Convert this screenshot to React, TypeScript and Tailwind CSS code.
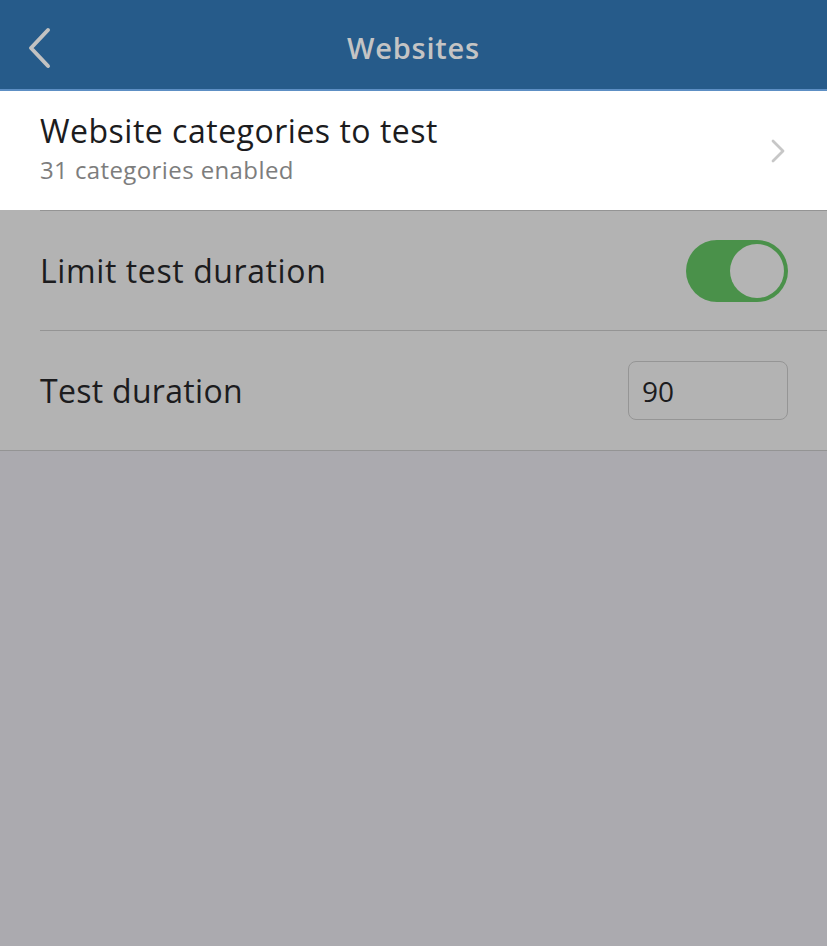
export default function App() {
  return (
    <div
      className="flex flex-col w-[827px] h-[946px] bg-[#abaaaf] overflow-hidden"
      style={{ fontFamily: '"Open Sans", "Noto Sans", sans-serif' }}
    >
      {/* Header */}
      <div className="relative flex items-center justify-center h-[91px] bg-[#265b8a] border-b-2 border-[#5d8fc4] pt-[6px]">
        <button className="absolute left-[24px] top-[27px] w-[30px] h-[42px] flex items-center justify-center">
          <svg width="26" height="42" viewBox="0 0 26 42" fill="none">
            <path d="M22 3 L5 21 L22 39" stroke="#c2c2c2" strokeWidth="4" strokeLinecap="round" strokeLinejoin="round" />
          </svg>
        </button>
        <span className="text-[29px] font-semibold tracking-[0.8px] text-[#c4c4c4]">Websites</span>
      </div>

      {/* Categories row */}
      <div className="flex items-center bg-white h-[119px] pl-[40px] pr-[40px]">
        <div className="flex flex-col flex-1 mt-[-4px]">
          <span className="text-[32px] leading-[40px] tracking-[0.5px] text-[#1c1c1e]">Website categories to test</span>
          <span className="text-[24px] leading-[32px] tracking-[0.4px] text-[#7d7d7d] mt-[3px]">31 categories enabled</span>
        </div>
        <svg width="16" height="26" viewBox="0 0 16 26" fill="none" className="mr-[1px]">
          <path d="M3 3 L13 13 L3 23" stroke="#c7c7c7" strokeWidth="2.8" strokeLinecap="round" strokeLinejoin="round" />
        </svg>
      </div>

      {/* Settings rows */}
      <div className="flex flex-col bg-[#b3b3b3] border-b border-[#949494]">
        <div className="pl-[40px]">
          <div className="flex items-center h-[121px] pr-[39px] border-t border-b border-[#949494]">
            <span className="flex-1 text-[32px] tracking-[0.6px] text-[#1c1c1e]">Limit test duration</span>
            <div className="relative w-[102px] h-[62px] rounded-full bg-[#4a914a]">
              <div className="absolute right-[4px] top-[4px] w-[54px] h-[54px] rounded-full bg-[#b4b4b4]" />
            </div>
          </div>
        </div>
        <div className="flex items-center h-[119px] pl-[40px] pr-[39px]">
          <span className="flex-1 text-[32px] tracking-[0.3px] text-[#1c1c1e]">Test duration</span>
          <div className="flex items-center w-[160px] h-[59px] rounded-[8px] border border-[#959595] pl-[13px]">
            <span className="text-[28px] text-[#1c1c1e]">90</span>
          </div>
        </div>
      </div>
    </div>
  );
}
